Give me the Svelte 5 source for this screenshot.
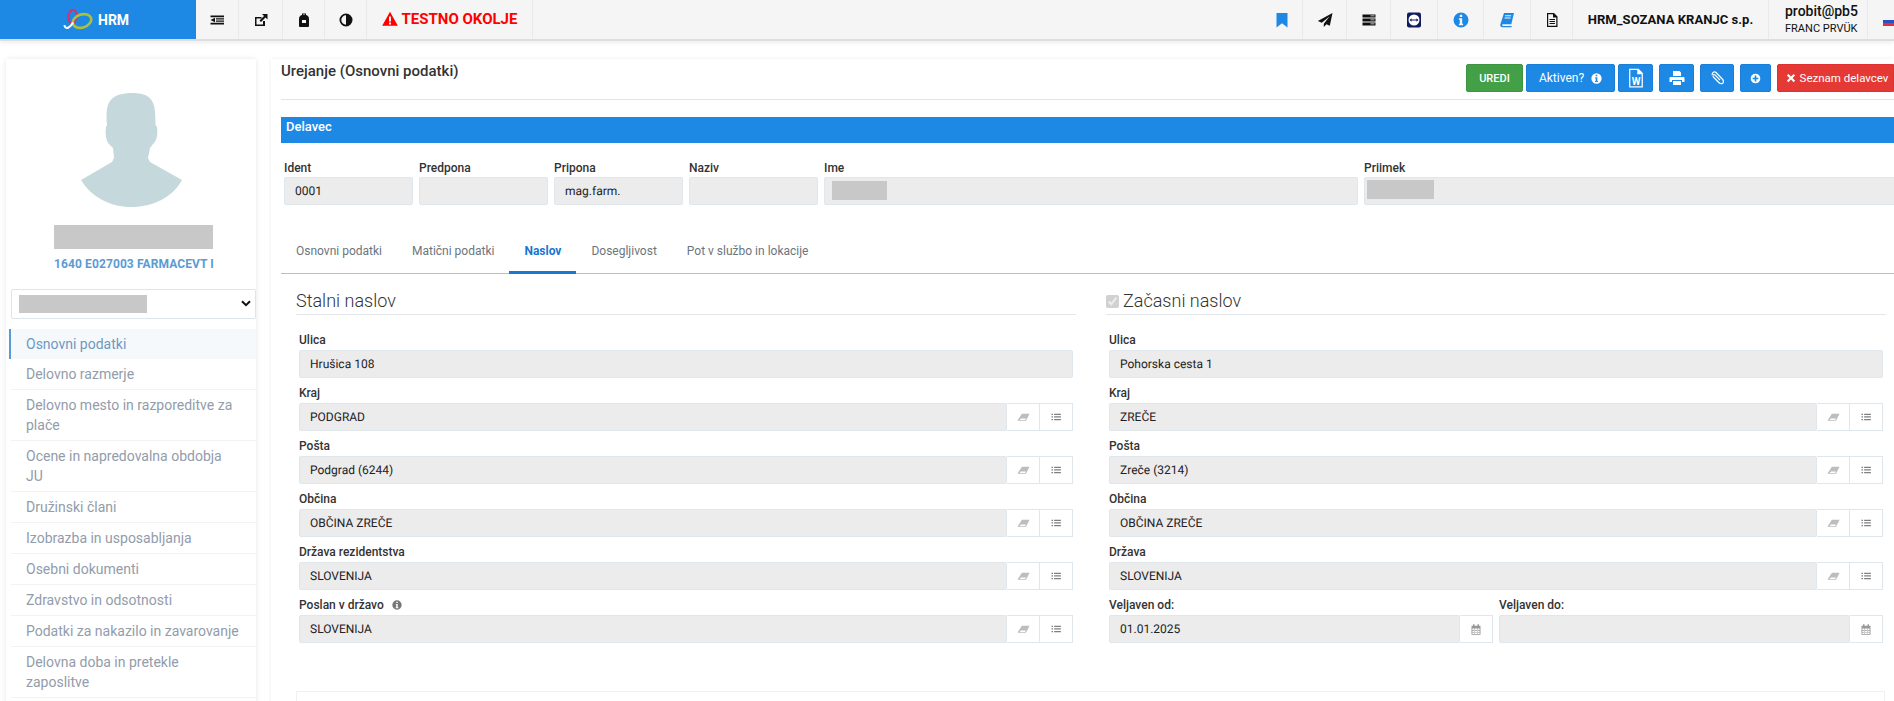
<script>
  const P = {
    outdent: 'M1.500 3.500h13.500v1.700H1.500zM7 6.300h8v1.300H7zM7 8.500h8v1.300H7zM1.500 10.800h13.500v1.700H1.500zM6 5.800v4.400L1.500 8z',
    external: 'M2 5h6.500v1.500h-5v6h6.500V9H12v5H2zM9 2h5.500v5.500l-2-2L8 10 6.500 8.500 11 4z',
    bag: 'M6 1.500h4V3c2 .5 3 2 3 4v7a1 1 0 0 1-1 1H4a1 1 0 0 1-1-1V7c0-2 1-3.500 3-4zM6 8v3h4V8zM7 3h2V2.500H7z',
    contrast: 'M8 1.500a6.500 6.500 0 1 1 0 13 6.500 6.500 0 0 1 0-13zM8 3.300a4.700 4.700 0 0 0 0 9.400z',
    warn: 'M8 .8l7.800 14H.200zM7 5.500v5h2v-5zM7 11.500v2h2v-2z',
    bookmark: 'M2.500 1h11v14.500L8 11.300 2.500 15.500z',
    plane: 'M15.500 1L.8 9l4 1.800L12.500 4.500 6.800 11.700V15l2.700-2.800 3.300 1.600z',
    server: 'M1.500 2.500h13v3h-13zM9.500 3.500v.8h4v-.8zM1.500 6.500h13v3h-13zM9.500 7.500v.8h4v-.8zM1.500 10.500h13v3h-13zM9.500 11.500v.8h4v-.8z',
    info: 'M8 .5a7.500 7.500 0 1 1 0 15 7.500 7.500 0 0 1 0-15zM6.800 2.700v2.200h2.400V2.700zM5.900 6.300v1.400h.9v4H5.900v1.500h4.200v-1.500h-.9V6.300z',
    book: 'M5 1h10l-2.700 11.300H4.200c-.8 0-1.200.5-1.100 1 .1.400.5.700 1.100.700h8.500l-.3 1.200H3.500C1.800 15.200 1 14 1.300 12.500zM6.200 3.300l-.2 1h6l.2-1zM5.700 5.400l-.2 1h6l.2-1z',
    doc: 'M3 1h7l3.500 3.500V15H3zM4.200 2.200v11.600h8.100V5.500H9V2.200zM5.500 7h5.500v1H5.500zM5.500 9h5.500v1H5.500zM5.500 11h5.500v1H5.500z',
    word: 'M2.500 .5h7.500l3.500 3.500v11.500h-11zM3.500 1.500v13h9V5H9V1.500z',
    print: 'M4 1h6.500L12 2.500V6H4zM1.500 7h13a1 1 0 0 1 1 1v4h-2.500v-2H3v2H.5V8a1 1 0 0 1 1-1zM4 11h8v4H4z',
    clip: 'M3.500 2.200c1.300-1.200 3-1.100 4.200.1l6 6.200c1.700 1.700 1.800 3.700.6 5-1.300 1.300-3.300 1.100-5-.6L4 7.500c-.9-.9-1-2.100-.2-2.900.8-.8 2-.7 2.900.2l4.800 5-.9.800-4.800-5c-.4-.4-.8-.5-1.100-.2-.3.300-.2.700.2 1.100L10.200 12c1.200 1.200 2.500 1.400 3.200.7.700-.8.600-2-.6-3.300l-6-6.200C5.900 2.300 4.900 2.200 4.300 3c-.8.800-.7 1.800.1 2.700l-.8.800C2.300 5.200 2.200 3.400 3.500 2.200z',
    plus: 'M8 1a7 7 0 1 1 0 14A7 7 0 0 1 8 1zM6.800 3.800v3H3.800v2.400h3v3h2.400v-3h3V6.800h-3v-3z',
    times: 'M3.800 1.400L8 5.600l4.200-4.200 2.400 2.400L10.400 8l4.200 4.200-2.400 2.400L8 10.400l-4.200 4.200-2.400-2.400L5.600 8 1.400 3.800z',
    eraser: 'M6 3.500H15.500L11 12H.5zM4.700 9.200L3.500 11h6.500l1-1.800z',
    list: 'M2 3.500h2v1.800H2zM5.500 3.500h9v1.800h-9zM2 7h2v1.800H2zM5.500 7h9v1.800h-9zM2 10.500h2v1.800H2zM5.500 10.500h9v1.800h-9z',
    cal: 'M4 1h2v2h4V1h2v2h2v12H2V3h2zM3.200 6.500V14h9.600V6.500zM3.200 8.800h9.600v.7H3.200zM3.200 11.300h9.600v.7H3.200zM5.500 6.500h.7V14h-.7zM9.500 6.500h.7V14h-.7z'
  };

  const nav = ['Delovno razmerje', 'Delovno mesto in razporeditve za plače', 'Ocene in napredovalna obdobja JU', 'Družinski člani', 'Izobrazba in usposabljanja', 'Osebni dokumenti', 'Zdravstvo in odsotnosti', 'Podatki za nakazilo in zavarovanje', 'Delovna doba in pretekle zaposlitve'];
  const idents = [['Ident', '0001'], ['Predpona', ''], ['Pripona', 'mag.farm.'], ['Naziv', ''], ['Ime', '', 'b1'], ['Priimek', '', 'b2']];
  const tabs = ['Osnovni podatki', 'Matični podatki', 'Naslov', 'Dosegljivost', 'Pot v službo in lokacije'];
  const left = [['Kraj', 'PODGRAD'], ['Pošta', 'Podgrad (6244)'], ['Občina', 'OBČINA ZREČE'], ['Država rezidentstva', 'SLOVENIJA'], ['Poslan v državo', 'SLOVENIJA', true]];
  const right = [['Kraj', 'ZREČE'], ['Pošta', 'Zreče (3214)'], ['Občina', 'OBČINA ZREČE'], ['Država', 'SLOVENIJA']];
</script>

{#snippet ic(name, cls)}
  <svg class={'ic ' + cls} viewBox="0 0 16 16" aria-hidden="true"><path fill-rule="evenodd" d={P[name]} /></svg>
{/snippet}

{#snippet lookup(label, value, info)}
  <div class="field">
    <label class="lbl">{label}{#if info}{@render ic('info', 'lblinfo')}{/if}</label>
    <div class="group">
      <input readonly {value} />
      <span class="addon">{@render ic('eraser', 'er')}</span>
      <span class="addon">{@render ic('list', 'li')}</span>
    </div>
  </div>
{/snippet}

{#snippet datefield(label, value)}
  <div class="field">
    <label class="lbl">{label}</label>
    <div class="group">
      <input readonly {value} />
      <span class="addon">{@render ic('cal', 'ca')}</span>
    </div>
  </div>
{/snippet}

<div class="page">
  <header class="top">
    <div class="brand">
      <svg class="logo" viewBox="0 0 30 21" aria-hidden="true">
        <ellipse cx="9.500" cy="7.500" rx="4" ry="6.800" fill="none" stroke="#d6306f" stroke-width="2" transform="rotate(8 9.500 7.500)" />
        <ellipse cx="19" cy="12" rx="9.500" ry="6.500" fill="none" stroke="#a8c23a" stroke-width="2.600" transform="rotate(-18 19 12)" />
        <path d="M1.500 16c0 2.500 2 3.500 4 2.500s3.500-3 4.500-5" fill="none" stroke="#fff" stroke-width="2" />
      </svg>
      <span>HRM</span>
    </div>
    <div class="cell w43">{@render ic('outdent', 'i16')}</div>
    <div class="cell w44">{@render ic('external', 'i16')}</div>
    <div class="cell w42">{@render ic('bag', 'i16')}</div>
    <div class="cell w42">{@render ic('contrast', 'i16')}</div>
    <div class="cell testno">{@render ic('warn', 'warn')}<span>TESTNO OKOLJE</span></div>

    <div class="cell w42 push">{@render ic('bookmark', 'i16 blue')}</div>
    <div class="cell w44">{@render ic('plane', 'i16')}</div>
    <div class="cell w44">{@render ic('server', 'i16')}</div>
    <div class="cell w47">
      <svg class="i16" viewBox="0 0 16 16" aria-hidden="true">
        <rect x="1" y=".5" width="14" height="15" rx="2" fill="#0f1c5e" />
        <circle cx="8" cy="8" r="5.500" fill="#fff" />
        <path d="M3.500 8l2-1.800v1.200h5V6.200l2 1.800-2 1.800V8.600h-5v1.200z" fill="#0f1c5e" />
      </svg>
    </div>
    <div class="cell w46">{@render ic('info', 'i16 blue')}</div>
    <div class="cell w47">{@render ic('book', 'i16 blue')}</div>
    <div class="cell w42">{@render ic('doc', 'i16')}</div>
    <div class="cell company">HRM_SOZANA KRANJC s.p.</div>
    <div class="cell user">
      <strong>probit@pb5</strong>
      <small>FRANC PRVÜK</small>
    </div>
    <div class="flagcell"><span class="flag"></span></div>
  </header>

  <div class="body">
    <aside class="side">
      <svg class="avatar" viewBox="0 0 101 114" aria-hidden="true">
        <path fill="#c5d9dd" d="M51 0C60 0 68 2 71 8C74 13 74.500 20 74.500 32L76 34C77 40 76 48 72 51L69 55L67 65L69 69L101 87C92 104 72 114 50 114C30 114 10 104 0 87L31 69L33 65L32 55L28 51C25 48 24 40 25 34L26 32C25 20 25.500 13 29 8C33 2 42 0 51 0Z" />
      </svg>
      <div class="blur name"></div>
      <div class="job">1640 E027003 FARMACEVT I</div>
      <div class="sel">
        <div class="blur selblur"></div>
        <svg class="chev" viewBox="0 0 10 7" aria-hidden="true"><path d="M1 1.200l4 4 4-4" fill="none" stroke="#111" stroke-width="2" /></svg>
      </div>
      <nav>
        <a class="item active" href="#top">Osnovni podatki</a>
        {#each nav as n}
          <a class="item" href="#top">{n}</a>
        {/each}
      </nav>
    </aside>

    <main class="card">
      <div class="head">
        <h1>Urejanje (Osnovni podatki)</h1>
        <div class="actions">
          <button class="btn green">UREDI</button>
          <button class="btn aktiv">Aktiven? {@render ic('info', 'aktinfo')}</button>
          <button class="btn ico w35">
            <svg class="i20" viewBox="0 0 16 16" aria-hidden="true">
              <path fill="#fff" fill-rule="evenodd" d={P.word} />
              <text x="8" y="13.500" text-anchor="middle" font-size="8" font-weight="700" fill="#fff" font-family="Roboto, sans-serif">W</text>
            </svg>
          </button>
          <button class="btn ico w35 ml">{@render ic('print', 'i16')}</button>
          <button class="btn ico w34 ml">{@render ic('clip', 'i16')}</button>
          <button class="btn ico w31 ml">{@render ic('plus', 'i11')}</button>
          <button class="btn red">{@render ic('times', 'i10')}<span>Seznam delavcev</span></button>
        </div>
      </div>

      <div class="bar">Delavec</div>

      <div class="idents">
        {#each idents as [l, v, b]}
          <div>
            <label class="idl">{l}</label>
            <div class="idwrap">
              <input readonly value={v} />
              {#if b}<div class={'blur ' + b}></div>{/if}
            </div>
          </div>
        {/each}
      </div>

      <div class="tabs">
        {#each tabs as t, i}
          <span class="tab" class:on={i === 2}>{t}</span>
        {/each}
      </div>

      <div class="cols">
        <section>
          <h2>Stalni naslov</h2>
          <div class="field">
            <label class="lbl">Ulica</label>
            <div class="group"><input readonly value="Hrušica 108" /></div>
          </div>
          {#each left as [l, v, inf]}
            {@render lookup(l, v, inf)}
          {/each}
        </section>
        <section>
          <h2><input class="chk" type="checkbox" checked disabled />Začasni naslov</h2>
          <div class="field">
            <label class="lbl">Ulica</label>
            <div class="group"><input readonly value="Pohorska cesta 1" /></div>
          </div>
          {#each right as [l, v]}
            {@render lookup(l, v, false)}
          {/each}
          <div class="dates">
            {@render datefield('Veljaven od:', '01.01.2025')}
            {@render datefield('Veljaven do:', '')}
          </div>
        </section>
      </div>

      <div class="lower"></div>
    </main>
  </div>
</div>

<style>
  :global(body) { margin: 0; background: #fff; }
  .page {
    width: 1894px; height: 701px; overflow: hidden;
    font-family: Roboto, "Liberation Sans", sans-serif; color: #222;
  }
  .ic { display: block; fill: currentColor; flex: none; }
  .i16 { width: 16px; height: 16px; }
  .i20 { width: 20px; height: 20px; }
  .i11 { width: 11px; height: 11px; }
  .i10 { width: 10px; height: 10px; }
  .blue { color: #1e88e5; }

  .top {
    height: 39px; display: flex; background: #f5f5f5;
    border-bottom: 2px solid #dedede; box-shadow: 0 2px 4px rgba(0,0,0,.07);
    color: #111;
  }
  .brand {
    width: 196px; flex: none; background: #1e88e5; color: #fff;
    display: flex; align-items: center; padding-left: 63px; box-sizing: border-box;
    font-size: 14px; font-weight: 700; gap: 5px;
  }
  .logo { width: 30px; height: 21px; display: block; }
  .cell {
    flex: none; display: flex; align-items: center; justify-content: center;
    border-right: 1px solid #e9e9e9; box-sizing: border-box;
  }
  .w42 { width: 42px; } .w43 { width: 43px; } .w44 { width: 44px; }
  .w46 { width: 46px; } .w47 { width: 47px; }
  .testno {
    width: 166px; gap: 4px; color: #f00; font-weight: 700; font-size: 15px;
    padding-bottom: 2px;
  }
  .warn { width: 16px; height: 16px; }
  .push { margin-left: auto; }
  .company { width: 196px; font-size: 13px; font-weight: 700; letter-spacing: .05px; }
  .user {
    width: 99px; flex-direction: column; align-items: flex-start; padding-left: 16px;
    justify-content: flex-start; padding-top: 3px;
  }
  .user strong { font-size: 14px; line-height: 16px; font-weight: 500; }
  .user small { font-size: 11px; line-height: 14px; margin-top: 3px; }
  .flagcell { width: 26px; flex: none; display: flex; align-items: center; padding-left: 15px; box-sizing: border-box; }
  .flag {
    width: 14px; height: 9px; flex: none; margin-top: 3px;
    background: linear-gradient(#f4f4f8 33%, #2a4fc0 33%, #2a4fc0 66%, #e03040 66%);
  }

  .body { display: flex; align-items: flex-start; padding-top: 18px; gap: 15px; padding-left: 6px; }
  .side {
    width: 250px; flex: none; height: 700px; background: #fff;
    box-shadow: 0 0 5px rgba(0,0,0,.1); border-radius: 2px;
  }
  .avatar { display: block; width: 101px; height: 114px; margin: 34px 0 0 75px; }
  .blur { background: #c8c8c8; }
  .name { width: 159px; height: 24px; margin: 18px 0 0 48px; }
  .job {
    margin-top: 7px; padding-left: 6px; text-align: center; font-size: 12px; line-height: 16px;
    font-weight: 700; color: #5b9bd5; letter-spacing: .1px;
  }
  .sel {
    margin: 17px 0 0 5px; height: 30px; box-sizing: border-box; border: 1px solid #dde5ec; border-radius: 2px;
    display: flex; align-items: center; justify-content: space-between; padding: 0 4px 0 7px;
  }
  .selblur { width: 128px; height: 18px; }
  .chev { width: 10px; height: 7px; display: block; margin-top: -2px; }
  nav { margin: 10px 0 0 3px; }
  .item {
    display: block; margin-left: 2px; padding: 5px 15px; font-size: 14px; line-height: 20px;
    color: #929cab; border-bottom: 1px solid #f1f3f5; text-decoration: none;
  }
  .item.active {
    margin-left: 0; border-left: 2px solid #5b9bd5; border-bottom: 0; background: #f5f9fc; color: #6f97bf;
  }

  .card {
    flex: none; width: 1623px; box-sizing: border-box; height: 700px; padding: 2px 0 0 10px; background: #fff;
    box-shadow: 0 0 4px rgba(0,0,0,.08);
  }
  .head {
    display: flex; justify-content: space-between; align-items: flex-start;
    padding-bottom: 7px; border-bottom: 1px solid #e4e4e4; height: 31px;
  }
  h1 { margin: 0; font-size: 15px; line-height: 20px; font-weight: 500; color: #333; }
  .actions { display: flex; margin-top: 3px; gap: 3px; }
  .btn {
    height: 28px; box-sizing: border-box; border: 1px solid #1a7fd8; border-radius: 2px; background: #1e88e5;
    color: #fff; font-family: inherit; padding: 0; display: flex; align-items: center; justify-content: center;
  }
  .green { width: 57px; background: #43a047; border-color: #3d9441; font-size: 11px; font-weight: 500; }
  .aktiv { width: 89px; font-size: 12px; gap: 7px; }
  .aktinfo { width: 11px; height: 11px; }
  .ico { flex: none; }
  .w35 { width: 35px; } .w34 { width: 34px; } .w31 { width: 31px; }
  .ml { margin-left: 3px; }
  .red {
    width: 117px; margin-left: 3px; background: #e53935; border-color: #dc3330; font-size: 11.500px;
    font-weight: 400; gap: 4px; border-radius: 2px 0 0 2px; padding-left: 3px;
  }
  .bar {
    margin-top: 17px; height: 26px; box-sizing: border-box; background: #1e88e5; color: #fff; padding: 1px 5px;
    font-size: 13px; line-height: 18px; font-weight: 500;
  }
  .idents {
    display: grid; grid-template-columns: repeat(4, 129px) 534px 535px; gap: 6px; padding-left: 3px;
    margin-top: 18px;
  }
  .idl { display: block; font-size: 12px; line-height: 14px; font-weight: 500; color: #333; padding-bottom: 2px; }
  .idwrap { position: relative; }
  .b1 { position: absolute; left: 8px; top: 4px; width: 55px; height: 19px; }
  .b2 { position: absolute; left: 3px; top: 3px; width: 67px; height: 19px; }
  input {
    display: block; width: 100%; height: 28px; box-sizing: border-box; background: #ececed;
    border: 1px solid #dfe6ec; border-radius: 2px; padding: 0 10px; font: 12px Roboto, "Liberation Sans", sans-serif;
    line-height: normal; color: #222; outline: none; min-width: 0; text-rendering: geometricPrecision;
  }
  .tabs { display: flex; margin-top: 25px; height: 43px; border-bottom: 1px solid #bdbdbd; box-sizing: content-box; }
  .tab {
    padding: 0 15px; font-size: 12px; line-height: 42px; height: 43px; color: #6c757d; box-sizing: border-box;
  }
  .tab.on { color: #1976d2; font-weight: 700; border-bottom: 3px solid #1976d2; height: 44px; }
  .cols { display: grid; grid-template-columns: 780px 780px; gap: 30px; padding-left: 15px; }
  h2 {
    margin: 17px 0 0; padding-bottom: 3px; font-size: 18px; line-height: 20px; font-weight: 300; color: #333;
    border-bottom: 1px solid #e4e8ea; display: flex; align-items: center;
  }
  .chk { width: 13px; height: 13px; margin: 0 4px 0 0; flex: none; }
  h2 + .field { margin-top: 10px; }
  .field { padding: 0 3px; min-width: 0; }
  .lbl { display: flex; align-items: center; gap: 8px; font-size: 12px; line-height: 14px; font-weight: 500; color: #333; padding: 8px 0 3px; }
  .lblinfo { width: 10px; height: 10px; color: #777; }
  .group { display: flex; }
  .group input { flex: 1; }
  .addon {
    width: 33px; height: 28px; flex: none; box-sizing: border-box; display: flex; align-items: center; justify-content: center;
    background: #fff; border: 1px solid #dfe6ec; border-left: 0;
  }
  .er { width: 13px; height: 13px; color: #bdbdbd; }
  .li { width: 12px; height: 12px; color: #808080; }
  .ca { width: 12px; height: 13px; color: #999; }
  .dates { display: grid; grid-template-columns: 1fr 1fr; }
  .dates .field:first-child { padding-right: 3px; }
  .lower { margin: 48px 0 0 15px; width: 1589px; height: 60px; box-sizing: border-box; border: 1px solid #f0f0f0; }
</style>
